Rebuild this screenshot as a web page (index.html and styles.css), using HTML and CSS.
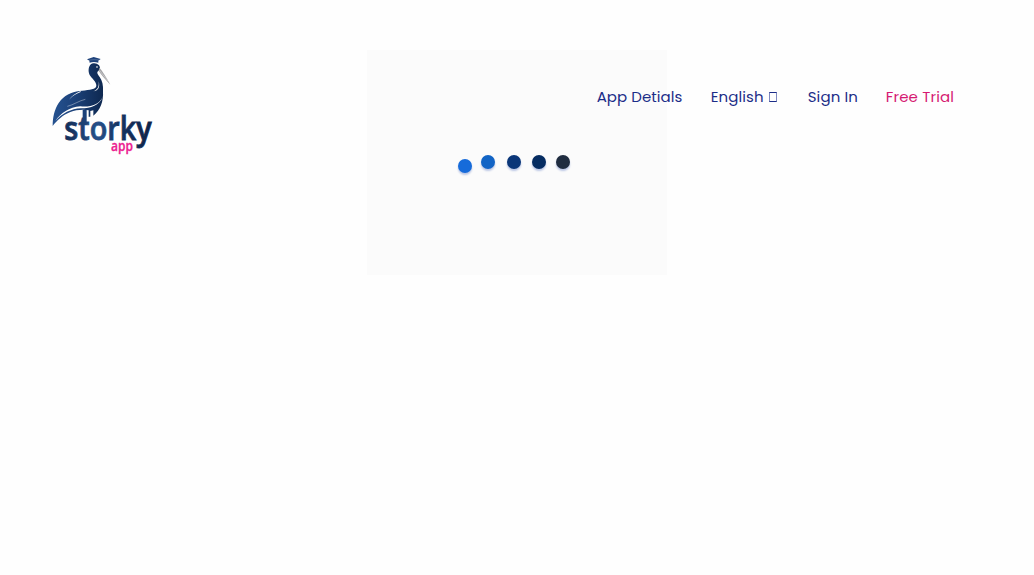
FILE: index.html
```html
<!DOCTYPE html>
<html lang="en">
<head>
<meta charset="utf-8">
<title>Storky App</title>
<link rel="stylesheet" href="styles.css">
</head>
<body>
<div class="loader">
  <span class="dot dot-1"></span>
  <span class="dot dot-2"></span>
  <span class="dot dot-3"></span>
  <span class="dot dot-4"></span>
  <span class="dot dot-5"></span>
</div>
<header class="header">
  <a class="brand">
    <svg class="logo" viewBox="0 0 375 360" role="img" aria-label="Storky app">
      <defs>
        <linearGradient id="body" x1="0" y1="0" x2="1" y2="0">
          <stop offset="0" stop-color="#255290"/>
          <stop offset=".4" stop-color="#1d437c"/>
          <stop offset="1" stop-color="#0e2850"/>
        </linearGradient>
        <linearGradient id="word" gradientUnits="userSpaceOnUse" x1="75" y1="0" x2="335" y2="0">
          <stop offset="0" stop-color="#122d58"/>
          <stop offset=".38" stop-color="#26508a"/>
          <stop offset=".6" stop-color="#163565"/>
          <stop offset="1" stop-color="#0d2248"/>
        </linearGradient>
      </defs>
      <path fill="url(#body)" d="M38 243C38 218 43 194 56 174C72 151 94 141 118 138C140 135 163 135 168 126C173 116 160 104 151 93C144 82 144 68 151 59C158 53 170 53 177 61C182 68 180 75 175 78C169 82 173 88 179 96C187 107 190 121 189 139C191 168 181 197 160 212L160 196L151 198L151 215L146 215L146 196L128 194C102 194 78 204 62 218C52 226 43 235 38 243Z"/>
      <path fill="#1e427b" d="M141 43L161 36L182 42L175 47L175 53C166 50 157 50 149 53L148 47Z"/>
      <path fill="none" stroke="#fff" stroke-width="1" stroke-opacity=".6" d="M143 47C155 43 169 43 179 46"/>
      <circle cx="171" cy="66" r="3" fill="#fff" fill-opacity=".8"/>
      <circle cx="171" cy="66" r="1.5" fill="#102b53"/>
      <path fill="#a3a3a6" d="M178 68C185 74 196 92 211 119C199 107 187 93 176 78Z"/>
      <path fill="none" stroke="#e8e8e9" stroke-width="1.5" d="M178 76L204 108"/>
      <path fill="#fff" d="M122 138C107 144 95 153 87 164C99 151 111 145 122 141ZM176 109C178 124 173 135 160 139C174 139 181 126 176 109ZM188 156C177 179 152 187 121 184C88 186 62 205 46 228C66 205 93 191 123 190C153 190 178 181 188 156Z"/>
      <path fill="none" stroke="#fff" stroke-opacity=".75" stroke-width="1.5" d="M82 184C100 180 117 167 136 163"/>
      <path fill="#1c4179" d="M128 195L140 195L140 240L128 240Z"/>
      <text class="word" x="73" y="285" textLength="262" lengthAdjust="spacingAndGlyphs">storky</text>
      <text class="app" x="213" y="317" textLength="66" lengthAdjust="spacingAndGlyphs">app</text>
    </svg>
  </a>
  <nav class="nav">
    <a class="link details">App Detials</a>
    <a class="link language"><span class="english">English</span><i class="missing"></i></a>
    <a class="link signin">Sign In</a>
    <a class="link trial">Free Trial</a>
  </nav>
</header>
</body>
</html>
```
FILE: styles.css
```css
* { box-sizing: border-box; }
body { margin: 0; background: #fefefe; font-family: Poppins, Inter, sans-serif; }
.header {
  position: relative;
  display: flex;
  justify-content: space-between;
  align-items: flex-start;
  padding: 45px 80.3px 0 40px;
}
.brand { display: block; }
.logo { display: block; width: 125px; height: 120px; }
.word { font: 600 97px "Open Sans", sans-serif; fill: url(#word); stroke: url(#word); stroke-width: 2.5; }
.app { font: 600 42px "Open Sans", sans-serif; fill: #ec2090; stroke: #ec2090; stroke-width: 1; }
.nav { display: flex; gap: 28px; padding-top: 40px; }
.link {
  display: flex;
  align-items: center;
  height: 24px;
  color: #1c2d88;
  font-size: 15px;
  line-height: 24px;
  white-space: nowrap;
}
.details { width: 86px; letter-spacing: .05px; }
.language { width: 69px; }
.english { letter-spacing: .1px; }
.missing { width: 8px; height: 10px; margin-left: auto; margin-right: 2.5px; border: 1px solid #1c2d88; border-left-color: #7f89c0; border-right-color: #7f89c0; }
.signin { width: 50px; letter-spacing: .1px; }
.trial { width: 68px; color: #d51972; letter-spacing: .15px; }
.loader {
  position: absolute;
  top: 50px;
  left: 367px;
  width: 300px;
  height: 225px;
  padding: 105.3px 0 0 91.3px;
  display: flex;
  align-items: flex-start;
  background: #fbfbfb;
}
.dot { width: 14px; height: 14px; border-radius: 50%; box-shadow: 0 2px 2px #b9c5e4; }
.dot-1 { margin-top: 4px; background: #166bda; }
.dot-2 { margin-left: 9px; background: #1264c5; }
.dot-3 { margin-left: 12px; background: #0a3678; }
.dot-4 { margin-left: 10.5px; background: #052c61; }
.dot-5 { margin-left: 10.5px; background: #202d40; }
```
